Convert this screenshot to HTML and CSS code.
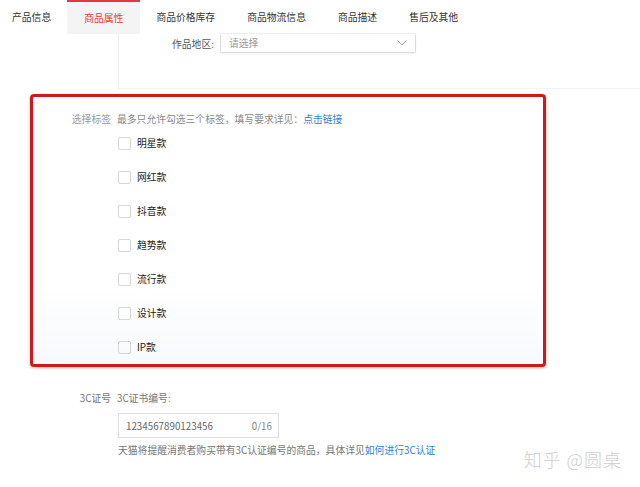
FILE: index.html
```
<!DOCTYPE html>
<html lang="zh-CN">
<head>
    <meta charset="UTF-8">
    <meta name="viewport" content="width=device-width, initial-scale=1.0">
    <title>商品属性</title>
    <link rel="stylesheet" href="styles.css">
</head>
<body>
    <div class="tabs">
        <div class="tab">产品信息</div>
        <div class="tab active">商品属性</div>
        <div class="tab">商品价格库存</div>
        <div class="tab">商品物流信息</div>
        <div class="tab">商品描述</div>
        <div class="tab">售后及其他</div>
    </div>

    <div class="panel">
        <div class="panel-row">
            <span class="panel-label">作品地区:</span>
            <div class="select">
                <span>请选择</span>
                <svg width="10" height="6" viewBox="0 0 10 6"><path d="M0.5 0.5 L5 5 L9.5 0.5" fill="none" stroke="#aaa" stroke-width="1"/></svg>
            </div>
        </div>
    </div>

    <div class="tag-block">
        <div class="field">
            <span class="field-label">选择标签</span>
            <span class="tip">最多只允许勾选三个标签，填写要求详见：<a href="#">点击链接</a></span>
        </div>
        <ul class="checks">
            <li><span class="box"></span>明星款</li>
            <li><span class="box"></span>网红款</li>
            <li><span class="box"></span>抖音款</li>
            <li><span class="box"></span>趋势款</li>
            <li><span class="box"></span>流行款</li>
            <li><span class="box"></span>设计款</li>
            <li><span class="box"></span>IP款</li>
        </ul>
    </div>

    <div class="cert-block">
        <div class="field">
            <span class="field-label">3C证号</span>
            <span class="sub-label">3C证书编号:</span>
        </div>
        <div class="cert-body">
            <div class="cert-input">
                <span>1234567890123456</span>
                <span class="count">0/16</span>
            </div>
            <p class="hint">天猫将提醒消费者购买带有3C认证编号的商品，具体详见<a href="#">如何进行3C认证</a></p>
        </div>
    </div>

    <div class="watermark">知乎 @圆桌</div>
</body>
</html>
```

FILE: styles.css
```
body {
    margin: 0;
    font-family: "Noto Sans CJK SC", "Liberation Sans", sans-serif;
    font-size: 9.8px;
    color: #333;
    background-color: #fff;
    position: relative;
    height: 487px;
    overflow: hidden;
}
a {
    color: #2f7fd0;
    text-decoration: none;
}
.tabs {
    display: flex;
    height: 34px;
}
.tab {
    padding: 0 16px;
    line-height: 34px;
    color: #333;
}
.tab:first-child {
    padding-left: 12px;
}
.active {
    color: #e4393c;
    background-color: #f4f4f4;
    border-top: 2px solid #e4393c;
    line-height: 32px;
    padding: 0 17px;
}
.panel {
    margin-left: 118px;
    height: 54px;
    border-left: 1px solid #ececec;
    border-bottom: 1px solid #f2f2f2;
}
.panel-row {
    display: flex;
    align-items: center;
    padding-left: 53px;
}
.panel-label {
    color: #555;
    width: 48px;
}
.select {
    width: 178px;
    height: 18px;
    margin-top: -1px;
    border: 1px solid #ddd;
    border-top-color: #eee;
    border-radius: 2px;
    display: flex;
    align-items: center;
    justify-content: space-between;
    padding: 0 8px;
    color: #999;
    box-shadow: 0 1px 2px rgba(0, 0, 0, 0.06);
}
.tag-block {
    margin: 5px 94px 0 30px;
    border: 3px solid #cc1a22;
    border-radius: 4px;
    box-shadow: 0 1px 3px rgba(150, 0, 0, 0.35);
    padding-top: 15px;
    background: linear-gradient(#fff 70%, #f7f9fc);
}
.field {
    display: flex;
    align-items: center;
    line-height: 14px;
}
.field-label {
    width: 78px;
    text-align: right;
    color: #999;
    margin-right: 6px;
}
.tip {
    color: #888;
}
.checks {
    list-style: none;
    margin: 0;
    padding: 0 0 0 85px;
}
.checks li {
    display: flex;
    align-items: center;
    height: 34px;
    color: #222;
}
.box {
    width: 11px;
    height: 11px;
    border: 1px solid #d6d6d6;
    border-radius: 2px;
    margin-right: 6px;
}
.cert-block {
    margin: 24px 0 0 33px;
}
.cert-block .field-label,
.sub-label {
    color: #777;
}
.cert-body {
    padding-left: 85px;
}
.cert-input {
    width: 146px;
    height: 23px;
    margin-top: 8px;
    border: 1px solid #ddd;
    display: flex;
    align-items: center;
    justify-content: space-between;
    padding: 0 6px 0 7px;
    color: #666;
}
.count {
    color: #888;
}
.hint {
    margin: 5px 0 0;
    color: #777;
    line-height: 14px;
}
.watermark {
    position: absolute;
    right: 18px;
    bottom: 15px;
    font-size: 18px;
    color: #cfcfcf;
    font-weight: 300;
    letter-spacing: 1px;
}
```
